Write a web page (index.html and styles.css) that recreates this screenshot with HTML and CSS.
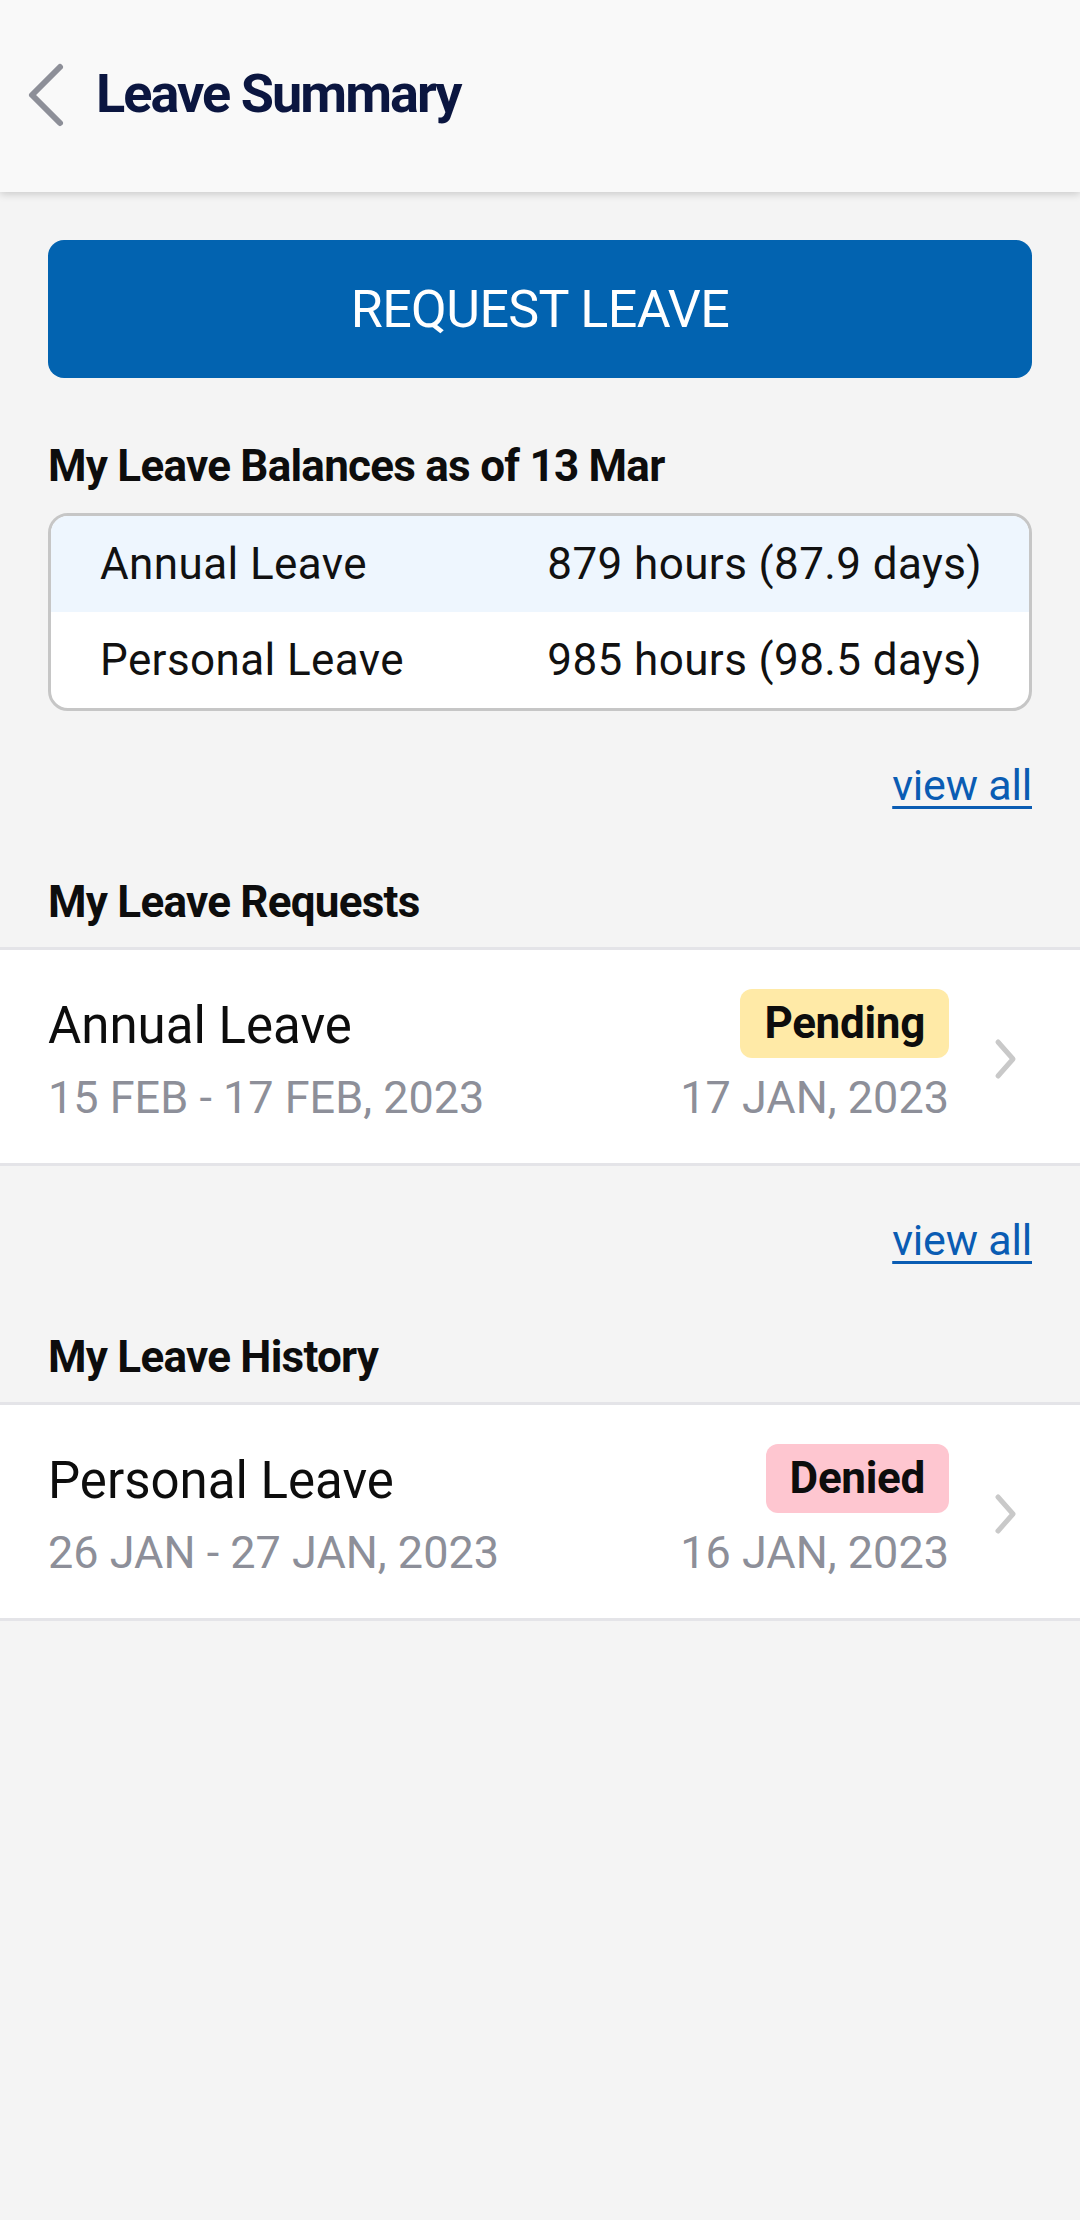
FILE: index.html
```html
<!DOCTYPE html>
<html lang="en">
<head>
<meta charset="utf-8">
<title>Leave Summary</title>
<link rel="stylesheet" href="styles.css">
</head>
<body>
<header class="topbar">
  <svg class="back" width="40" height="66" viewBox="0 0 40 66" aria-hidden="true">
    <path d="M34 5 L6 33 L34 61" fill="none" stroke="#8d8f98" stroke-width="6" stroke-linecap="round" stroke-linejoin="round"/>
  </svg>
  <h1 class="title">Leave Summary</h1>
</header>

<main class="content">
  <div class="pad">
    <button class="request-btn">REQUEST LEAVE</button>
    <h2 class="heading balances-heading">My Leave Balances as of 13 Mar</h2>
    <div class="balances">
      <div class="bal-row bal-alt"><span>Annual Leave</span><span>879 hours (87.9 days)</span></div>
      <div class="bal-row"><span>Personal Leave</span><span>985 hours (98.5 days)</span></div>
    </div>
    <div class="viewall"><a href="#">view all</a></div>
    <h2 class="heading">My Leave Requests</h2>
  </div>
  <div class="item">
    <div class="item-main">
      <div class="item-title">Annual Leave</div>
      <div class="item-date">15 FEB - 17 FEB, 2023</div>
    </div>
    <div class="item-side">
      <span class="badge badge-pending">Pending</span>
      <div class="item-date">17 JAN, 2023</div>
    </div>
    <svg class="chev" width="28" height="44" viewBox="0 0 28 44" aria-hidden="true">
      <path d="M6 5 L21 22 L6 39" fill="none" stroke="#c9c9c9" stroke-width="5" stroke-linecap="round" stroke-linejoin="round"/>
    </svg>
  </div>

  <div class="pad">
    <div class="viewall"><a href="#">view all</a></div>
    <h2 class="heading">My Leave History</h2>
  </div>
  <div class="item">
    <div class="item-main">
      <div class="item-title">Personal Leave</div>
      <div class="item-date">26 JAN - 27 JAN, 2023</div>
    </div>
    <div class="item-side">
      <span class="badge badge-denied">Denied</span>
      <div class="item-date">16 JAN, 2023</div>
    </div>
    <svg class="chev" width="28" height="44" viewBox="0 0 28 44" aria-hidden="true">
      <path d="M6 5 L21 22 L6 39" fill="none" stroke="#c9c9c9" stroke-width="5" stroke-linecap="round" stroke-linejoin="round"/>
    </svg>
  </div>
</main>
</body>
</html>
```

FILE: styles.css
```css
* { box-sizing: border-box; }
html, body {
  margin: 0;
  padding: 0;
}
body {
  background: #f4f4f4;
  font-family: Roboto, "Liberation Sans", Arial, sans-serif;
  color: #111;
  width: 1080px;
  min-height: 2220px;
}
.topbar {
  height: 192px;
  background: #f9f9f9;
  box-shadow: 0 2px 8px rgba(0, 0, 0, 0.18);
  display: flex;
  align-items: center;
  padding-left: 26px;
  position: relative;
  z-index: 1;
}
.back {
  display: block;
  margin-top: -2px;
}
.title {
  margin: -4px 0 0 30px;
  font-size: 54px;
  font-weight: 700;
  color: #0b1640;
  letter-spacing: -1.95px;
  line-height: 1;
}
.pad {
  padding: 0 48px;
}
.request-btn {
  display: block;
  width: 100%;
  height: 138px;
  margin: 48px 0 0;
  border: none;
  border-radius: 16px;
  background: #0263b0;
  color: #fff;
  font-family: inherit;
  font-size: 52px;
  font-weight: 400;
  letter-spacing: -0.6px;
}
.heading {
  margin: 0;
  font-size: 44px;
  line-height: 52px;
  font-weight: 700;
  letter-spacing: -0.75px;
  color: #0d0d0d;
}
.balances-heading {
  margin-top: 62px;
}
.balances {
  margin-top: 21px;
  border: 3px solid #c6c6c6;
  border-radius: 20px;
  overflow: hidden;
  background: #fff;
}
.bal-row {
  display: grid;
  grid-template-columns: 1fr auto;
  align-items: center;
  height: 96px;
  padding: 0 47px 0 49px;
  font-size: 44px;
  letter-spacing: 0.4px;
  color: #111;
}
.bal-alt {
  background: #eef6fe;
}
.viewall {
  text-align: right;
  margin-top: 44px;
  height: 60px;
  line-height: 60px;
}
.viewall a {
  font-size: 43px;
  letter-spacing: -0.2px;
  color: #0a5cb3;
  text-decoration: underline;
  text-underline-offset: 6px;
  text-decoration-thickness: 3px;
}
.viewall + .heading {
  margin-top: 61px;
}
.item {
  display: flex;
  align-items: center;
  margin-top: 19px;
  background: #fff;
  border-top: 3px solid #e4e4e8;
  border-bottom: 3px solid #e4e4e8;
  padding: 39px 0 35px 48px;
}
.item-main {
  flex: 1;
}
.item-side {
  display: flex;
  flex-direction: column;
  align-items: flex-end;
}
.item-title {
  font-size: 51px;
  line-height: 73px;
  color: #0d0d0d;
}
.item-date {
  margin-top: 6px;
  font-size: 45px;
  line-height: 60px;
  color: #8d8f99;
}
.item-side .item-date {
  margin-top: 10px;
}
.badge {
  display: block;
  height: 69px;
  line-height: 69px;
  padding: 0 24px;
  border-radius: 12px;
  font-size: 44px;
  font-weight: 700;
  color: #0d0d0d;
  letter-spacing: -0.3px;
}
.badge-pending { background: #ffeaa7; }
.badge-denied { background: #fec6d0; }
.chev {
  display: block;
  margin: 0 60px 0 43px;
}
```
